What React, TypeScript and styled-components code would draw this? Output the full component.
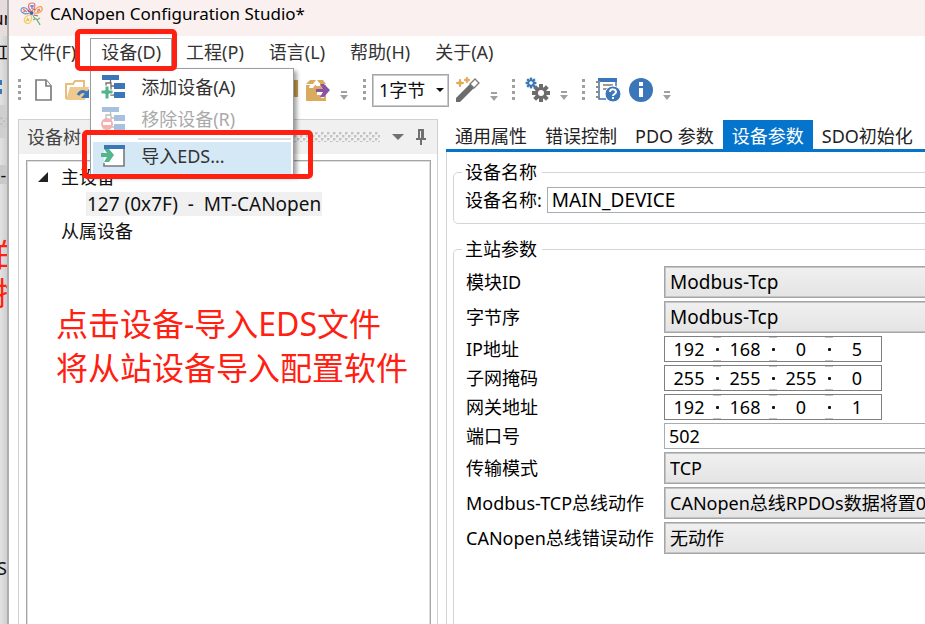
import React from "react";
import styled, { createGlobalStyle } from "styled-components";

const GlobalStyle = createGlobalStyle`
  *, *::before, *::after { box-sizing: border-box; }
  html, body { margin: 0; height: 100%; }
  body {
    background: #fff;
    color: #101010;
    font: 18px/24px "Noto Sans", "Noto Sans CJK SC", sans-serif;
    overflow: hidden;
  }
  button, input, select { font: inherit; color: inherit; margin: 0; }
`;

const Screen = styled.div`
  display: flex;
  height: 100vh;
`;

/* ---------- window behind ---------- */

const BackWindow = styled.div`
  flex: none;
  display: flex;
  flex-direction: column;
  width: 9px;
  overflow: hidden;
  background: linear-gradient(90deg, #e2e2e2, #cfcfcf);
  border-right: 2px solid #adadad;
`;

const BackBand = styled.div<{ $h: number; $bg?: string; $align?: string }>`
  flex: none;
  display: flex;
  align-items: center;
  justify-content: ${(p) => p.$align ?? "center"};
  height: ${(p) => p.$h}px;
  background: ${(p) => p.$bg ?? "transparent"};
  white-space: nowrap;
`;

const BackNote = styled.span`
  margin-left: -4px;
  color: #ff2011;
  font-size: 32px;
  line-height: 36px;
`;

/* ---------- main window ---------- */

const Window = styled.main`
  flex: 1;
  min-width: 0;
  display: flex;
  flex-direction: column;
  background: #fff;
`;

const TitleBar = styled.header`
  display: flex;
  align-items: flex-start;
  gap: 6px;
  height: 36px;
  padding: 2px 11px;
  background: #f9f0ef;
  color: #000;
  font-size: 17px;
  white-space: nowrap;
`;

const MenuBar = styled.nav`
  display: flex;
  gap: 3px;
  padding-top: 2px;
  height: 32px;
`;

const MenuSlot = styled.div`
  position: relative;
`;

const MenuButton = styled.button<{ $open?: boolean }>`
  height: 31px;
  padding: 0 10px 4px;
  border: 1px solid ${(p) => (p.$open ? "#9a9da3" : "transparent")};
  border-bottom: 0;
  background: #fff;
  color: #333;
  white-space: nowrap;
`;

const Popup = styled.div`
  position: absolute;
  z-index: 3;
  top: 30px;
  left: 0;
  width: 204px;
  padding: 4px 2px 0;
  background: #fff;
  border: 1px solid #9a9da3;
  box-shadow: 3px 3px 4px rgba(0, 0, 0, 0.35);
`;

const PopupItem = styled.button<{ $active?: boolean }>`
  position: relative;
  display: flex;
  align-items: center;
  gap: 16px;
  width: 100%;
  height: 32px;
  padding: 0 8px 4px;
  border: 0;
  background: ${(p) => (p.$active ? "#d5e8f5" : "transparent")};
  color: #333;
  text-align: left;
  &:disabled { color: #aaa; }
  &:disabled svg { opacity: 0.45; }
`;

const PopupRule = styled.hr`
  height: 2px;
  margin: 1px 0 2px 45px;
  border: 0;
  background: #dcdcdc;
`;

const Highlight = styled.span<{ $inset: string }>`
  position: absolute;
  z-index: 4;
  inset: ${(p) => p.$inset};
  border: 5px solid #ff2011;
  border-radius: 5px;
  pointer-events: none;
`;

/* ---------- toolbar ---------- */

const Toolbar = styled.div`
  display: flex;
  align-items: center;
  height: 44px;
  padding-left: 9px;
`;

const ToolGroup = styled.div<{ $wide?: boolean }>`
  display: flex;
  align-items: center;
  width: ${(p) => (p.$wide ? "330px" : "auto")};
  margin-right: ${(p) => (p.$wide ? "15px" : "14px")};
`;

const Grip = styled.span`
  width: 3px;
  height: 23px;
  margin-right: 6px;
  background: repeating-linear-gradient(#a0a0a0 0 3px, transparent 3px 6px);
`;

const ToolButton = styled.button<{ $end?: boolean }>`
  display: grid;
  place-items: center;
  width: 33px;
  height: 32px;
  margin-left: ${(p) => (p.$end ? "auto" : "0")};
  padding: 0;
  border: 0;
  background: none;
`;

const MoreButton = styled.button`
  align-self: flex-end;
  width: 8px;
  height: 15px;
  margin-left: 6px;
  padding: 0 0 6px;
  border: 0;
  background: none;
  svg { display: block; }
`;

const SizeWrap = styled.span`
  display: grid;
  align-items: center;
  margin-right: 2px;
  & > * { grid-area: 1 / 1; }
  svg { justify-self: end; margin-right: 5px; pointer-events: none; }
`;

const SizeSelect = styled.select`
  appearance: none;
  width: 77px;
  height: 33px;
  padding: 0 6px;
  border: 1px solid #a3a6ab;
  outline: 1px solid #c9cacc;
  outline-offset: -2px;
  border-radius: 0;
  background: #fff;
`;

/* ---------- panels ---------- */

const Body = styled.div`
  flex: 1;
  min-height: 0;
  display: flex;
  gap: 8px;
  padding: 7px 0 0 9px;
`;

const TreePanel = styled.section`
  flex: none;
  display: flex;
  flex-direction: column;
  width: 420px;
  border: solid #d0d0d0;
  border-width: 1px 1px 0;
`;

const TreeHeader = styled.div`
  display: flex;
  align-items: center;
  gap: 12px;
  height: 34px;
  padding: 0 11px 0 8px;
  background: #f0f0f0;
  color: #444;
`;

const Texture = styled.span`
  flex: 1;
  height: 10px;
  background: radial-gradient(circle at 1px 1px, #c2c2c2 1px, transparent 2px) 0 0 / 6px 6px,
    radial-gradient(circle at 1px 1px, #c2c2c2 1px, transparent 2px) 3px 3px / 6px 6px;
`;

const IconButton = styled.button`
  display: grid;
  padding: 0;
  border: 0;
  background: none;
`;

const TreeBox = styled.div`
  flex: 1;
  position: relative;
  margin: 6px 6px 0 7px;
  padding: 2px 11px;
  border: solid #a5a5a5;
  border-width: 1px 1px 0;
  box-shadow: inset 1px 1px #dedede, inset -1px 0 #dedede;
`;

const TreeRow = styled.div`
  display: flex;
  align-items: center;
  gap: 13px;
  height: 27px;
  white-space: pre;
`;

const TreeGap = styled.span`
  width: 10px;
`;

const TreeLeaf = styled.span`
  margin-left: 48px;
  padding: 0 1px;
  background: #f0f0f0;
  font-size: 19px;
`;

const Annotation = styled.p`
  position: absolute;
  top: 141px;
  left: 29px;
  margin: 0;
  color: #ff2011;
  font-size: 32px;
  line-height: 44px;
  white-space: nowrap;
`;

const Editor = styled.section`
  flex: 1;
  min-width: 0;
  display: flex;
  flex-direction: column;
  overflow: hidden;
`;

const Tabs = styled.div`
  display: flex;
  height: 33px;
  padding-top: 1px;
  border-bottom: 3px solid #0574cc;
`;

const Tab = styled.button<{ $on?: boolean }>`
  flex: none;
  padding: 3px 9px 0;
  border: 0;
  background: ${(p) => (p.$on ? "#0574cc" : "transparent")};
  color: ${(p) => (p.$on ? "#fff" : "#222")};
  white-space: nowrap;
`;

const TabPage = styled.div`
  flex: 1;
  display: flex;
  flex-direction: column;
  gap: 13px;
  width: calc(100% + 40px);
  padding: 8px 8px 0 6px;
  border-left: 1px solid #d2d2d2;
`;

const Group = styled.fieldset<{ $grow?: boolean }>`
  flex: ${(p) => (p.$grow ? 1 : "none")};
  min-width: 0;
  margin: 0;
  padding: ${(p) => (p.$grow ? "5px" : "3px")} 10px 10px 12px;
  border: 1px solid #d3d5d9;
  border-bottom-width: ${(p) => (p.$grow ? "0" : "1px")};
  border-radius: ${(p) => (p.$grow ? "5px 5px 0 0" : "5px")};
  color: #000;
`;

const Legend = styled.legend`
  margin-left: -4px;
  padding: 0 5px 0 3px;
`;

const NameRow = styled.div`
  display: flex;
  align-items: center;
  gap: 5px;
  margin-left: -1px;
  white-space: nowrap;
`;

const FormGrid = styled.div`
  display: grid;
  grid-template-columns: 194px 1fr;
  column-gap: 4px;
  row-gap: 3px;
  align-items: center;
  white-space: nowrap;
`;

const TextInput = styled.input<{ $large?: boolean }>`
  width: 100%;
  min-width: 0;
  height: 26px;
  padding: 0 4px;
  border: 1px solid #a9acb3;
  border-radius: 0;
  background: #fff;
  font-size: ${(p) => (p.$large ? 19 : 18)}px;
`;

const Picker = styled.select<{ $large?: boolean }>`
  appearance: none;
  width: 100%;
  height: 32px;
  padding: 0 5px;
  border: 1px solid #a5a5a5;
  outline: 1px solid #c4c4c4;
  outline-offset: -2px;
  border-radius: 0;
  background: linear-gradient(#f0f0f0, #e4e4e4);
  font-size: ${(p) => (p.$large ? 19 : 18)}px;
`;

const IpBox = styled.div`
  display: flex;
  width: 218px;
  height: 26px;
  border: 1px solid #7f7f7f;
`;

const IpPart = styled.input`
  flex: 1;
  min-width: 0;
  padding: 0;
  border: 0;
  background: none;
  text-align: center;
`;

const IpDot = styled.span`
  display: grid;
  place-items: center;
  width: 8px;
  border: solid #c4c4c4;
  border-width: 1px 0;
  &::before {
    content: "";
    width: 3px;
    height: 3px;
    border-radius: 1px;
    background: #111;
  }
`;

/* ---------- icons ---------- */

const AppIcon = () => (
  <svg width="24" height="24" viewBox="0 0 24 24" fill="none" strokeWidth="1.2">
    <circle cx="11.500" cy="11" r="2" fill="#4a5fb0" />
    <path d="M11 9C7 5 8 1 12 1s4 4 0 8" stroke="#e07a78" />
    <path d="M10 4h4M12 3v4" stroke="#5b6fc0" />
    <path d="M9 11C6 13 1 11 1 8s5-4 8 2" stroke="#6f9ccf" />
    <path d="M3 7l4 3M3 10l3-1" stroke="#e57373" />
    <path d="M14 10c2-5 7-7 8-4s-3 6-8 5" stroke="#efa24a" />
    <path d="M17 8l3-1M17 10l3-2" stroke="#e07a78" />
    <path d="M10 13c-6 1-7 6-4 8s7-2 5-8" stroke="#f0cf5a" />
    <path d="M7 16l2 3M6 19l3-2" stroke="#e9b84a" />
    <path d="M13 13c1 5 3 3 4 5s2 2 3 5M15 17l-2 1M17 18l3-2" stroke="#69b86f" />
    <path d="M8 8l2 2M14 8l1-1M14 13l4 1" stroke="#c94a86" />
  </svg>
);

const Network = ({ mode }: { mode: "add" | "remove" }) => (
  <svg width="24" height="24" viewBox="0 0 24 24">
    <path fill="#3b76b8" d="M1 0h17v5H1zM13 8h11v6H13zM13 17h11v6H13z" />
    <path fill="none" stroke="#707070" strokeWidth="1.300" d="M9.500 5v3M5 12V8h5v12h3M10 11h3" />
    {mode === "add" ? (
      <path fill="#54b48c" stroke="#fff" strokeWidth="1" d="M4 11h4v4h4v4H8v5H4v-5H0v-4h4z" />
    ) : (
      <g>
        <circle cx="6" cy="17" r="6" fill="#e8534f" />
        <path fill="#fff" d="M2 15h8v3H2z" />
      </g>
    )}
  </svg>
);

const ImportIcon = () => (
  <svg width="24" height="24" viewBox="0 0 24 24">
    <path fill="#fff" d="M3 5h20v17H3z" />
    <path fill="#3b76b8" d="M3 1h21v4H3z" />
    <path fill="none" stroke="#7a7a7a" strokeWidth="1.600" d="M3 19v3h20V5" />
    <path fill="#54b48c" d="M0 9h6L3 5h5l5 6-5 7H3l3-5H0z" />
  </svg>
);

const NewIcon = () => (
  <svg width="24" height="24" viewBox="0 0 24 24" fill="#fff" stroke="#7d7d7d" strokeWidth="1.700">
    <path d="M4 2h10l5 6v14H4z" />
    <path d="M14 2v6h5" />
  </svg>
);

const OpenIcon = () => (
  <svg width="26" height="24" viewBox="0 0 26 24">
    <path fill="#fff" stroke="#e6bd7e" strokeWidth="2" d="M2 21V6h7l2-3h9v6" />
    <path fill="#efc98f" d="M2 22 6 9h19l-4 13z" />
    <path fill="none" stroke="#3b76b8" strokeWidth="3" d="M14 17c3-5 7-4 9-1" />
    <path fill="#3b76b8" d="M25 11v9h-8z" />
  </svg>
);

const BoxIcon = () => (
  <svg width="26" height="24" viewBox="0 0 26 24">
    <path fill="#c9a04f" d="M2 2h24v17H2z" />
  </svg>
);

const ExportIcon = () => (
  <svg width="26" height="24" viewBox="0 0 26 24">
    <path fill="#d9ab5e" d="M1 7h20v16H1z" />
    <path fill="#d9ab5e" d="M1 6 5 2h6L8 6zM12 2h6l3 4h-6z" />
    <path fill="#fff" d="M5 7h5L8 10H4zM11 5h4v3h-4zM12 8h6v3h-6v6h4v3h3V8z" />
    <path fill="#8b52a3" d="M11 11h7l-3-5h4l6 6-6 7h-4l3-5h-7z" />
  </svg>
);

const WandIcon = () => (
  <svg width="26" height="26" viewBox="0 0 26 26">
    <path fill="#6c6c6c" d="M1 21 15 7l4 4L5 25l-4 0z" />
    <path fill="#fff" stroke="#7a7a7a" strokeWidth="1.300" d="m15 7 5-5 4 4-5 5z" />
    <path fill="#e8a955" d="m5 2 1 3 3 1-3 1-1 3-1-3-3-1 3-1zM12 0l1 2 2 1-2 1-1 2-1-2-2-1 2-1z" stroke="#e8a955" />
  </svg>
);

const Gear = ({ x, y, s, color }: { x: number; y: number; s: number; color: string }) => (
  <g transform={`translate(${x} ${y}) scale(${s})`}>
    {[0, 45, 90, 135].map((a) => (
      <path key={a} fill={color} transform={`rotate(${a})`} d="M-2-9h4V9h-4z" />
    ))}
    <circle r="6" fill={color} />
    <circle r="3" fill="#fff" />
  </g>
);

const GearsIcon = () => (
  <svg width="26" height="26" viewBox="0 0 26 26">
    <Gear x={6} y={6} s={0.6} color="#3b76b8" />
    <Gear x={16} y={16} s={1} color="#6c6c6c" />
  </svg>
);

const HelpIcon = () => (
  <svg width="26" height="26" viewBox="0 0 26 26">
    <path fill="#3b76b8" d="M3 1h19v4H3z" />
    <path fill="none" stroke="#3b76b8" strokeWidth="1.500" d="M4 5v17h7M21 5v5" />
    <path stroke="#7a7a7a" strokeWidth="1.500" d="M8 8h10M8 12h7" />
    <path stroke="#8a8a8a" strokeWidth="2" d="M1 5h4M1 10h4M1 15h4M1 20h4" />
    <circle cx="18" cy="17" r="8" fill="#3b76b8" stroke="#fff" />
    <path fill="none" stroke="#fff" strokeWidth="2" d="M15 15c0-4 6-3 6 0 0 2-3 2-3 4M18 20v2" />
  </svg>
);

const InfoIcon = () => (
  <svg width="24" height="24" viewBox="0 0 24 24">
    <circle cx="12" cy="12" r="12" fill="#3b76b8" />
    <path fill="#fff" d="M10 4h4v4h-4zM10 10h4v9h-4z" />
  </svg>
);

const More = () => (
  <MoreButton type="button">
    <svg width="8" height="9" viewBox="0 0 8 9" fill="#a0a0a0">
      <path d="M1 0h6v2H1zM0 4h8L4 9z" />
    </svg>
  </MoreButton>
);

const PinIcon = () => (
  <svg width="10" height="16" viewBox="0 0 10 16" fill="#707070">
    <path d="M2 0h6v9h2v2H6v5H4v-5H0V9h2zm2 2v7h1V2z" />
  </svg>
);

const DownIcon = ({ w, h, color }: { w: number; h: number; color: string }) => (
  <svg width={w} height={h} viewBox="0 0 12 6">
    <path fill={color} d="M0 0h12L6 6z" />
  </svg>
);

const ExpandedIcon = () => (
  <svg width="10" height="10" viewBox="0 0 10 10">
    <path fill="#222" d="M10 0v10H0z" />
  </svg>
);

const BackIcon = () => (
  <svg width="7" height="14" viewBox="0 0 7 14">
    <path fill="#3b76b8" d="M0 0h2v5H0zM0 9h2v5H0z" />
  </svg>
);

/* ---------- data ---------- */

type Field =
  | { kind: "select" | "text"; id: string; label: string; value: string; large?: boolean }
  | { kind: "ip"; id: string; label: string; value: string[] };

const fields: Field[] = [
  { kind: "select", id: "module", label: "模块ID", value: "Modbus-Tcp", large: true },
  { kind: "select", id: "order", label: "字节序", value: "Modbus-Tcp", large: true },
  { kind: "ip", id: "ip", label: "IP地址", value: ["192", "168", "0", "5"] },
  { kind: "ip", id: "mask", label: "子网掩码", value: ["255", "255", "255", "0"] },
  { kind: "ip", id: "gateway", label: "网关地址", value: ["192", "168", "0", "1"] },
  { kind: "text", id: "port", label: "端口号", value: "502" },
  { kind: "select", id: "mode", label: "传输模式", value: "TCP" },
  { kind: "select", id: "bus", label: "Modbus-TCP总线动作", value: "CANopen总线RPDOs数据将置0" },
  { kind: "select", id: "error", label: "CANopen总线错误动作", value: "无动作" },
];

const tabs = ["通用属性", "错误控制", "PDO 参数", "设备参数", "SDO初始化"];

function Control({ field }: { field: Field }) {
  if (field.kind === "select") {
    return (
      <Picker id={field.id} $large={field.large}>
        <option>{field.value}</option>
      </Picker>
    );
  }
  if (field.kind === "text") return <TextInput id={field.id} defaultValue={field.value} />;
  return (
    <IpBox>
      {field.value.map((part, i) => (
        <React.Fragment key={i}>
          {i > 0 && <IpDot />}
          <IpPart id={i === 0 ? field.id : undefined} defaultValue={part} />
        </React.Fragment>
      ))}
    </IpBox>
  );
}

function DeviceMenu() {
  return (
    <MenuSlot>
      <MenuButton type="button" $open>设备(D)</MenuButton>
      <Popup>
        <PopupItem type="button"><Network mode="add" />添加设备(A)</PopupItem>
        <PopupItem type="button" disabled><Network mode="remove" />移除设备(R)</PopupItem>
        <PopupRule />
        <PopupItem type="button" $active>
          <ImportIcon />导入EDS...
          <Highlight $inset="-12px -22px -5px -11px" />
        </PopupItem>
      </Popup>
      <Highlight $inset="-9px -5px -3px -15px" />
    </MenuSlot>
  );
}

export default function App() {
  return (
    <Screen>
      <GlobalStyle />
      <BackWindow>
        <BackBand $h={36} $bg="#e6dcdb">un</BackBand>
        <BackBand $h={32}>工</BackBand>
        <BackBand $h={37} $align="flex-start"><BackIcon /></BackBand>
        <BackBand $h={33} $bg="#cfcfcf"><Texture /></BackBand>
        <BackBand $h={27} />
        <BackBand $h={19} $bg="#c9c9c9">-</BackBand>
        <BackBand $h={52} />
        <BackBand $h={38} $align="flex-start"><BackNote>的</BackNote></BackBand>
        <BackBand $h={38} $align="flex-start"><BackNote>挣</BackNote></BackBand>
        <BackBand $h={244} />
        <BackBand $h={24} $align="flex-end">DS</BackBand>
      </BackWindow>

      <Window>
        <TitleBar><AppIcon />CANopen Configuration Studio*</TitleBar>

        <MenuBar>
          <MenuButton type="button">文件(F)</MenuButton>
          <DeviceMenu />
          {["工程(P)", "语言(L)", "帮助(H)", "关于(A)"].map((m) => (
            <MenuButton type="button" key={m}>{m}</MenuButton>
          ))}
        </MenuBar>

        <Toolbar>
          <ToolGroup $wide>
            <Grip />
            <ToolButton type="button"><NewIcon /></ToolButton>
            <ToolButton type="button"><OpenIcon /></ToolButton>
            <ToolButton type="button" $end><BoxIcon /></ToolButton>
            <ToolButton type="button"><ExportIcon /></ToolButton>
            <More />
          </ToolGroup>
          <ToolGroup>
            <Grip />
            <SizeWrap>
              <SizeSelect id="bytes"><option>1字节</option></SizeSelect>
              <DownIcon w={8} h={4} color="#111" />
            </SizeWrap>
            <ToolButton type="button"><WandIcon /></ToolButton>
            <More />
          </ToolGroup>
          <ToolGroup>
            <Grip />
            <ToolButton type="button"><GearsIcon /></ToolButton>
            <More />
          </ToolGroup>
          <ToolGroup>
            <Grip />
            <ToolButton type="button"><HelpIcon /></ToolButton>
            <ToolButton type="button"><InfoIcon /></ToolButton>
            <More />
          </ToolGroup>
        </Toolbar>

        <Body>
          <TreePanel>
            <TreeHeader>
              设备树
              <Texture />
              <IconButton type="button"><DownIcon w={12} h={6} color="#707070" /></IconButton>
              <IconButton type="button"><PinIcon /></IconButton>
            </TreeHeader>
            <TreeBox>
              <TreeRow><ExpandedIcon />主设备</TreeRow>
              <TreeRow><TreeLeaf>127 (0x7F)  -  MT-CANopen</TreeLeaf></TreeRow>
              <TreeRow><TreeGap />从属设备</TreeRow>
              <Annotation>点击设备-导入EDS文件<br />将从站设备导入配置软件</Annotation>
            </TreeBox>
          </TreePanel>

          <Editor>
            <Tabs>
              {tabs.map((t) => (
                <Tab type="button" key={t} $on={t === "设备参数"}>{t}</Tab>
              ))}
            </Tabs>
            <TabPage>
              <Group>
                <Legend>设备名称</Legend>
                <NameRow>
                  <label htmlFor="name">设备名称:</label>
                  <TextInput id="name" defaultValue="MAIN_DEVICE" $large />
                </NameRow>
              </Group>
              <Group $grow>
                <Legend>主站参数</Legend>
                <FormGrid>
                  {fields.map((f) => (
                    <React.Fragment key={f.id}>
                      <label htmlFor={f.id}>{f.label}</label>
                      <Control field={f} />
                    </React.Fragment>
                  ))}
                </FormGrid>
              </Group>
            </TabPage>
          </Editor>
        </Body>
      </Window>
    </Screen>
  );
}
